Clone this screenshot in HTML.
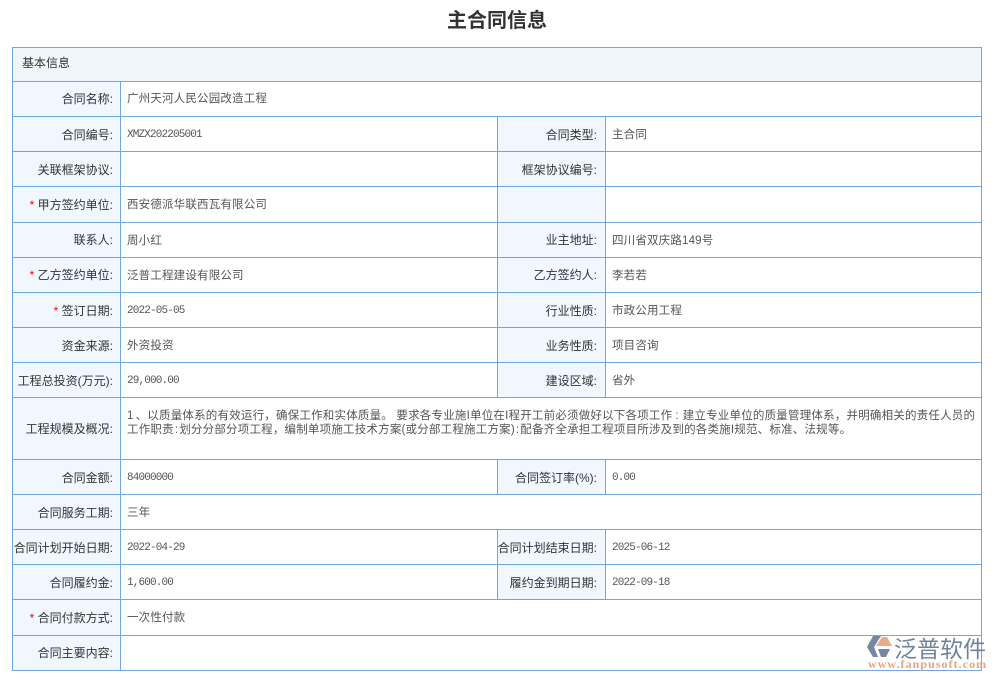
<!DOCTYPE html>
<html lang="zh-CN"><head><meta charset="utf-8"><title>主合同信息</title>
<style>
html,body{margin:0;padding:0;background:#fff}
body{width:996px;height:680px;position:relative;overflow:hidden;font-family:"Liberation Sans","Noto Sans CJK SC",sans-serif}
.b{position:absolute;background:#f0f7fe}
.h{position:absolute;height:1px;background:#6fa8dc}
.v{position:absolute;width:1px;background:#6fa8dc}
.l{position:absolute;width:100px;text-align:right;font-size:12px;line-height:16px;color:#333;white-space:nowrap}
.t{position:absolute;font-size:11.5px;letter-spacing:.17px;line-height:16px;color:#555;white-space:nowrap}
.m{position:absolute;font-size:11px;letter-spacing:-.85px;line-height:16px;color:#555;white-space:nowrap;font-family:"Liberation Mono","Noto Sans CJK SC",monospace}
.r{color:#f00}
.c1{margin:0 4px 0 3px}
.c2{margin:0 1px}
</style></head><body>
<div style="position:absolute;left:-1px;top:8px;width:996px;text-align:center;font-size:20px;font-weight:bold;line-height:26px;color:#333">主合同信息</div>

<div class="b" style="left:12px;top:47px;width:969px;height:34px;background:#f1f6fd"></div>
<div class="b" style="left:12px;top:81px;width:108px;height:589px"></div>
<div class="b" style="left:497px;top:116px;width:108px;height:281px"></div>
<div class="b" style="left:497px;top:459px;width:108px;height:35px"></div>
<div class="b" style="left:497px;top:529px;width:108px;height:70px"></div>

<div class="h" style="left:12px;width:970px;top:47px"></div>
<div class="h" style="left:12px;width:970px;top:81px"></div>
<div class="h" style="left:12px;width:970px;top:116px"></div>
<div class="h" style="left:12px;width:970px;top:151px"></div>
<div class="h" style="left:12px;width:970px;top:186px"></div>
<div class="h" style="left:12px;width:970px;top:222px"></div>
<div class="h" style="left:12px;width:970px;top:257px"></div>
<div class="h" style="left:12px;width:970px;top:292px"></div>
<div class="h" style="left:12px;width:970px;top:327px"></div>
<div class="h" style="left:12px;width:970px;top:362px"></div>
<div class="h" style="left:12px;width:970px;top:397px"></div>
<div class="h" style="left:12px;width:970px;top:459px"></div>
<div class="h" style="left:12px;width:970px;top:494px"></div>
<div class="h" style="left:12px;width:970px;top:529px"></div>
<div class="h" style="left:12px;width:970px;top:564px"></div>
<div class="h" style="left:12px;width:970px;top:599px"></div>
<div class="h" style="left:12px;width:970px;top:635px"></div>
<div class="h" style="left:12px;width:970px;top:670px"></div>

<div class="v" style="left:12px;top:47px;height:624px"></div>
<div class="v" style="left:981px;top:47px;height:624px"></div>
<div class="v" style="left:120px;top:81px;height:590px"></div>
<div class="v" style="left:497px;top:116px;height:281px"></div>
<div class="v" style="left:605px;top:116px;height:281px"></div>
<div class="v" style="left:497px;top:459px;height:35px"></div>
<div class="v" style="left:605px;top:459px;height:35px"></div>
<div class="v" style="left:497px;top:529px;height:70px"></div>
<div class="v" style="left:605px;top:529px;height:70px"></div>

<div class="l" style="left:22px;top:55px;width:auto">基本信息</div>

<div class="l" style="left:13px;top:91px">合同名称:</div>
<div class="l" style="left:13px;top:127px">合同编号:</div>
<div class="l" style="left:13px;top:162px">关联框架协议:</div>
<div class="l" style="left:13px;top:197px"><span class="r">*</span> 甲方签约单位:</div>
<div class="l" style="left:13px;top:232px">联系人:</div>
<div class="l" style="left:13px;top:267px"><span class="r">*</span> 乙方签约单位:</div>
<div class="l" style="left:13px;top:303px"><span class="r">*</span> 签订日期:</div>
<div class="l" style="left:13px;top:338px">资金来源:</div>
<div class="l" style="left:13px;top:373px">工程总投资(万元):</div>
<div class="l" style="left:13px;top:421px">工程规模及概况:</div>
<div class="l" style="left:13px;top:470px">合同金额:</div>
<div class="l" style="left:13px;top:505px">合同服务工期:</div>
<div class="l" style="left:13px;top:540px">合同计划开始日期:</div>
<div class="l" style="left:13px;top:575px">合同履约金:</div>
<div class="l" style="left:13px;top:610px"><span class="r">*</span> 合同付款方式:</div>
<div class="l" style="left:13px;top:645px">合同主要内容:</div>

<div class="l" style="left:497px;top:127px">合同类型:</div>
<div class="l" style="left:497px;top:162px">框架协议编号:</div>
<div class="l" style="left:497px;top:232px">业主地址:</div>
<div class="l" style="left:497px;top:267px">乙方签约人:</div>
<div class="l" style="left:497px;top:303px">行业性质:</div>
<div class="l" style="left:497px;top:338px">业务性质:</div>
<div class="l" style="left:497px;top:373px">建设区域:</div>
<div class="l" style="left:497px;top:470px">合同签订率(%):</div>
<div class="l" style="left:497px;top:540px">合同计划结束日期:</div>
<div class="l" style="left:497px;top:575px">履约金到期日期:</div>

<div class="t" style="left:127px;top:91px">广州天河人民公园改造工程</div>
<div class="m" style="left:127px;top:127px">XMZX202205001</div>
<div class="t" style="left:127px;top:197px">西安德派华联西瓦有限公司</div>
<div class="t" style="left:127px;top:233px">周小红</div>
<div class="t" style="left:127px;top:268px">泛普工程建设有限公司</div>
<div class="m" style="left:127px;top:303px">2022-05-05</div>
<div class="t" style="left:127px;top:338px">外资投资</div>
<div class="m" style="left:127px;top:373px">29,000.00</div>
<div class="t" style="left:127px;top:408px;letter-spacing:.2px"><span style="margin-right:2px">1</span>、以质量体系的有效运行，确保工作和实体质量。 要求各专业施I单位在I程开工前必须做好以下各项工作<span class="c1">:</span>建立专业单位的质量管理体系，并明确相关的责任人员的</div>
<div class="t" style="left:127px;top:422px;letter-spacing:.2px">工作职责<span class="c2">:</span>划分分部分项工程，编制单项施工技术方案(或分部工程施工方案)<span class="c2">:</span>配备齐全承担工程项目所涉及到的各类施I规范、标准、法规等。</div>
<div class="m" style="left:127px;top:470px">84000000</div>
<div class="t" style="left:127px;top:505px">三年</div>
<div class="m" style="left:127px;top:540px">2022-04-29</div>
<div class="m" style="left:127px;top:575px">1,600.00</div>
<div class="t" style="left:127px;top:610px">一次性付款</div>

<div class="t" style="left:612px;top:127px">主合同</div>
<div class="t" style="left:612px;top:233px">四川省双庆路149号</div>
<div class="t" style="left:612px;top:268px">李若若</div>
<div class="t" style="left:612px;top:303px">市政公用工程</div>
<div class="t" style="left:612px;top:338px">项目咨询</div>
<div class="t" style="left:612px;top:373px">省外</div>
<div class="m" style="left:612px;top:470px">0.00</div>
<div class="m" style="left:612px;top:540px">2025-06-12</div>
<div class="m" style="left:612px;top:575px">2022-09-18</div>

<svg style="position:absolute;left:866px;top:635px" width="27" height="24" viewBox="0 0 27 24">
<path d="M7 1H15L8 12L12 22H7L1 12Z" fill="#76879f"/>
<path d="M10 11L16 2H21L26 11Z" fill="#e8ac8a"/>
<path d="M12 14H24L20 22H15Z" fill="#76879f"/>
</svg>
<div style="position:absolute;left:894px;top:633px;font-size:23px;line-height:28px;letter-spacing:0;color:#71839c;white-space:nowrap;font-family:'Noto Sans CJK SC',sans-serif">泛普软件</div>
<div style="position:absolute;left:868px;top:658px;font-size:12px;line-height:12px;letter-spacing:1.05px;color:#e3a583;white-space:nowrap;font-family:'Liberation Serif',serif;font-weight:bold">www.fanpusoft.com</div>
</body></html>
